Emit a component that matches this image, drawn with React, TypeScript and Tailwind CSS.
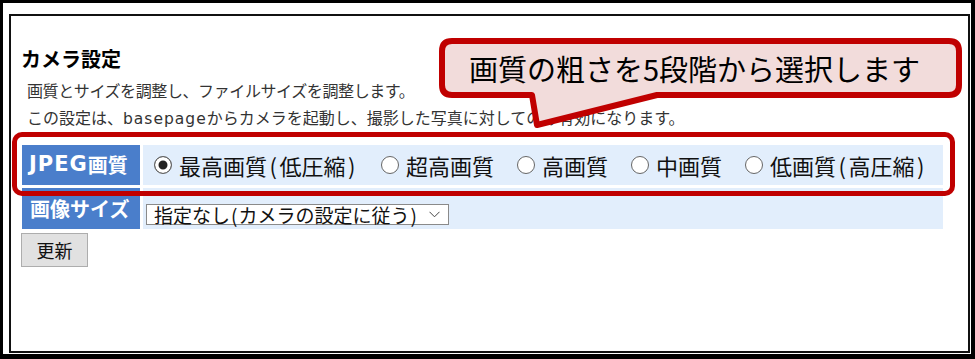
import React from "react";

const font = { fontFamily: '"Noto Sans CJK JP", "Noto Sans", sans-serif' };

function P({ c, w }: { c: string; w: string }) {
  return <span className={w}>{c}</span>;
}

function Radio({ checked, label }: { checked?: boolean; label: React.ReactNode }) {
  return (
    <label className="flex items-center gap-[7px]">
      <input
        type="radio"
        name="q"
        defaultChecked={checked}
        className="appearance-none w-[18px] h-[18px] rounded-full border border-[#666] bg-white checked:bg-[#222] checked:shadow-[inset_0_0_0_3.5px_white] m-0"
      />
      <span className="text-[22px] leading-[26px] text-[#111] whitespace-nowrap">{label}</span>
    </label>
  );
}

export default function App() {
  const pw = "px-[2.5px]";
  return (
    <div
      className="w-[975px] h-[359px] bg-black pt-[3px] pl-[3px] pr-[4px] pb-[5px]"
      style={font}
    >
      <div className="w-full h-full bg-white pt-[11px] pl-[6px] pr-[1px] pb-[1px]">
        <div className="relative w-full h-full border-2 border-[#111]">
          <div className="ml-[10px] mt-[30px] text-[20px] font-bold leading-[26px] text-black">
            カメラ設定
          </div>
          <div className="ml-[16px] mt-[7px] text-[16px] leading-[22px] text-[#333] tracking-[-0.4px] whitespace-nowrap">
            画質とサイズを調整し、ファイルサイズを調整します。
          </div>
          <div className="ml-[16px] mt-[5px] text-[16px] leading-[22px] text-[#333] whitespace-nowrap">
            この設定は、
            <span className="tracking-[1px]" style={{ fontFamily: '"DejaVu Sans", sans-serif', fontSize: "15.5px" }}>
              basepage
            </span>
            からカメラを起動し、撮影した写真に対してのみ有効になります。
          </div>

          <div className="ml-[11px] mt-[15px] grid grid-cols-[118px_800px] gap-[3px]">
            <div className="h-[40px] bg-[#4a7ecb] flex items-center pl-[7px] text-white font-bold text-[20px] whitespace-nowrap">
              <span className="tracking-[1px] text-[21px]" style={{ fontFamily: '"DejaVu Sans", sans-serif' }}>
                JPEG
              </span>
              画質
            </div>
            <div className="h-[40px] bg-[#e2eefc] flex items-center pl-[11px] gap-[23px]">
              <Radio
                checked
                label={
                  <>
                    最高画質<P c="(" w={pw} />低圧縮<P c=")" w={pw} />
                  </>
                }
              />
              <Radio label="超高画質" />
              <Radio label="高画質" />
              <Radio label="中画質" />
              <Radio
                label={
                  <>
                    低画質<P c="(" w={pw} />高圧縮<P c=")" w={pw} />
                  </>
                }
              />
            </div>
            <div className="h-[41px] bg-[#4a7ecb] flex items-center pl-[8px] text-white font-bold text-[20px]">
              画像サイズ
            </div>
            <div className="h-[41px] bg-[#e2eefc] pl-[3px] pt-[16px]">
              <div className="w-[303px] h-[21px] bg-white border border-[#8a8a8a] flex items-center pl-[7px] pr-[8px]">
                <span className="flex-1 text-[19px] leading-[20px] text-[#111] whitespace-nowrap">
                  指定なし<P c="(" w="px-[1px]" />カメラの設定に従う<P c=")" w="px-[1px]" />
                </span>
                <svg width="11" height="7" viewBox="0 0 11 7">
                  <path d="M0.5 0.8 L5.5 5.8 L10.5 0.8" fill="none" stroke="#444" strokeWidth="1" />
                </svg>
              </div>
            </div>
          </div>

          <div className="ml-[10px] mt-[4px] w-[67px] h-[34px] bg-[#e1e1e1] border border-[#adadad] flex items-center justify-center text-[18px] text-[#111]">
            更新
          </div>

          {/* annotation: red highlight */}
          <div className="absolute left-[1px] top-[116px] w-[943px] h-[64px] border-[5px] border-[#c00000] rounded-[10px]" />

          {/* annotation: callout */}
          <svg
            className="absolute left-[428px] top-[22px]"
            width="525"
            height="95"
            viewBox="0 0 525 95"
          >
            <path
              d="M13 3 H510 Q520 3 520 13 V47 Q520 57 510 57 H218 L98 87 L93 57 H13 Q3 57 3 47 V13 Q3 3 13 3 Z"
              fill="#f2dcdb"
              stroke="#c00000"
              strokeWidth="6"
              strokeLinejoin="round"
            />
          </svg>
          <div className="absolute left-[428px] top-[22px] w-[523px] h-[60px] flex items-center pl-[30px] text-[29px] leading-none text-black whitespace-nowrap">
            画質の粗さを5段階から選択します
          </div>
        </div>
      </div>
    </div>
  );
}
